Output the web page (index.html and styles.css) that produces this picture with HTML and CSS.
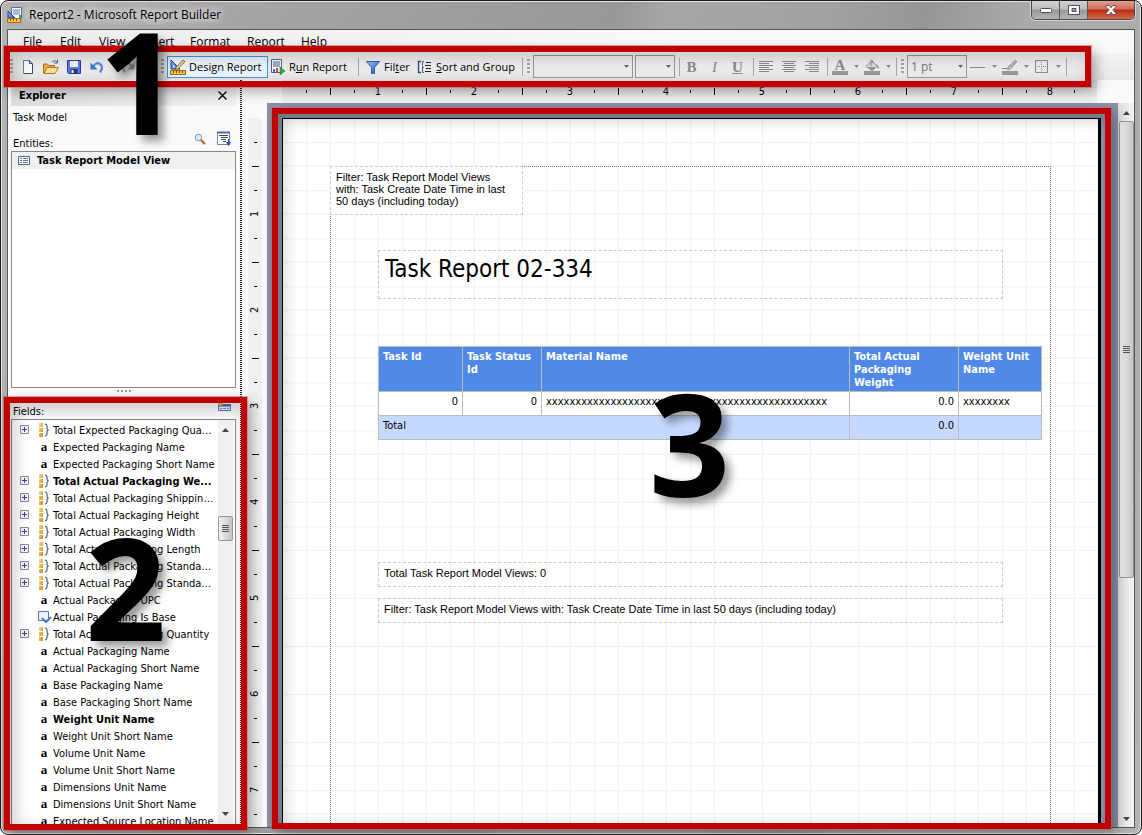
FILE: index.html
```html
<!DOCTYPE html>
<html lang="en">
<head>
    <meta charset="UTF-8">
    <title>Report2 - Microsoft Report Builder</title>
    <link rel="stylesheet" href="styles.css">
</head>
<body>

<!-- shared icons -->
<svg class="sprite" aria-hidden="true">
    <defs>
        <linearGradient id="gold" x1="0" y1="0" x2="1" y2="1">
            <stop offset="0" stop-color="#ffd98a"/>
            <stop offset="1" stop-color="#d08a12"/>
        </linearGradient>
        <linearGradient id="blue" x1="0" y1="0" x2="1" y2="1">
            <stop offset="0" stop-color="#a9cdf8"/>
            <stop offset="1" stop-color="#1d4fb8"/>
        </linearGradient>
    </defs>
    <symbol id="i-design" viewBox="0 0 16 16">
        <path d="M1 1v9h9z" fill="url(#blue)" stroke="#1c3f94"/>
        <path d="M3 6v2.500h2.500z" fill="#fff"/>
        <path d="M6 8.500 13 1l2 1.500L8 10l-2.500.7z" fill="#f3d08a" stroke="#7a5a3a" stroke-width=".8"/>
        <path d="M.5 11.500h15v4H.5z" fill="#f7c64a" stroke="#a56a06"/>
        <path d="M3.500 12v2M6.500 12v2M9.500 12v2M12.500 12v2" stroke="#7d4e00"/>
    </symbol>
    <symbol id="i-sum" viewBox="0 0 12 16">
        <path d="M1 1h4v4H1zM1 6h4v4H1zM1 11h4v4H1z" fill="url(#gold)"/>
        <path d="M7 2q2 0 2 2v2q0 2 1.500 2Q9 8 9 10v2q0 2-2 2" fill="none" stroke="#2c3c5c"/>
    </symbol>
    <symbol id="i-plus" viewBox="0 0 9 9">
        <path d="M.5.5h8v8h-8z" fill="#f4f4f4" stroke="#8c8c8c"/>
        <path d="M2 4.500h5M4.500 2v5" stroke="#2a4a9c"/>
    </symbol>
    <symbol id="i-down" viewBox="0 0 5 3"><path d="M0 0h5L2.500 3z" fill="currentColor"/></symbol>
</svg>

<div class="window">
    <header class="titlebar">
        <svg class="app-icon" viewBox="0 0 16 16">
            <path d="M4.500.5h10v11h-10z" fill="#fff" stroke="#5a6f96"/>
            <path d="M6 3h7M6 5h7M6 7h7" stroke="#5378b8"/>
            <path d="M12 8h2v5h-2z" fill="#2fb344"/>
            <path d="M1 4v7h7z" fill="url(#blue)" stroke="#1c3f94"/>
            <path d="M.5 11.500h13v4H.5z" fill="#f7c64a" stroke="#a56a06"/>
            <path d="M3.500 12v2M6.500 12v2M9.500 12v2" stroke="#7d4e00"/>
        </svg>
        <span class="title">Report2 - Microsoft Report Builder</span>
        <div class="win-buttons">
            <button class="win-btn" aria-label="Minimize">
                <svg width="12" height="5" viewBox="0 0 12 5"><rect x=".5" y=".5" width="11" height="4" rx="1" fill="#fff" stroke="#4a4c60"/></svg>
            </button>
            <button class="win-btn" aria-label="Restore">
                <svg width="12" height="10" viewBox="0 0 12 10"><path d="M.5.5h11v9H.5zM4 3.500v3h4v-3z" fill="#fff" fill-rule="evenodd" stroke="#4a4c60"/></svg>
            </button>
            <button class="win-btn win-close" aria-label="Close">
                <svg width="12" height="10" viewBox="0 0 12 10"><path d="M1 .5h3l2 2.300L8 .5h3v1L7.800 5 11 8.500v1H8L6 7.200 4 9.500H1v-1L4.200 5 1 1.500z" fill="#fff" stroke="#5a4a58" stroke-width=".9"/></svg>
            </button>
        </div>
    </header>

    <div class="client">
        <nav class="menubar">
            <button class="m-file"><u>F</u>ile</button>
            <button class="m-edit"><u>E</u>dit</button>
            <button class="m-view"><u>V</u>iew</button>
            <button class="m-insert"><u>I</u>nsert</button>
            <button class="m-format">F<u>o</u>rmat</button>
            <button class="m-report">Re<u>p</u>ort</button>
            <button class="m-help"><u>H</u>elp</button>
        </nav>

        <div class="toolbar">
            <span class="grip"></span>
            <button class="tool wide" aria-label="New">
                <svg width="16" height="16" viewBox="0 0 16 16"><path d="M3.500 1.500h6l3 3v10h-9z" fill="#fff" stroke="#6b7f9f"/><path d="M9.500 1.500v3h3M12.500 5v9.500h-8" fill="none" stroke="#2f4a75"/></svg>
            </button>
            <button class="tool wide" aria-label="Open">
                <svg width="16" height="16" viewBox="0 0 16 16"><path d="M.5 14V5h4l1 1.500h6V14z" fill="#e6b24a" stroke="#a8701a"/><path d="M1 14.500 4 8.500h11.500l-3.500 6z" fill="#ffe09a" stroke="#b47a1c"/><path d="M9 3q3-3 5 0M14.500.5V4H11" fill="none" stroke="#4b6a94"/></svg>
            </button>
            <button class="tool wide" aria-label="Save">
                <svg width="16" height="16" viewBox="0 0 16 16"><path d="M1.500 1.500h13v13h-12l-1-1z" fill="#5b7fe0" stroke="#2b3d9c"/><path d="M4 2h8v6H4z" fill="#f4f7ff"/><path d="M4.500 10h7v4.500h-7z" fill="#28366f"/><path d="M5.500 11h2v3h-2z" fill="#fff"/></svg>
            </button>
            <button class="tool wide" aria-label="Undo">
                <svg width="16" height="16" viewBox="0 0 16 16"><path d="M4 8q3-5.500 7-3t0 8.500" fill="none" stroke="#5b8fdc" stroke-width="2.400"/><path d="M1.500 3.500v7h7z" fill="#3f78cc"/></svg>
            </button>
            <button class="tool redo" aria-label="Redo">
                <svg width="16" height="16" viewBox="0 0 16 16"><path d="M12 8Q9 2.500 5 5t0 8.500" fill="none" stroke="#a0a0a0" stroke-width="2"/><path d="M14.500 3.500v7h-7z" fill="#999"/></svg>
            </button>
            <span class="sep"></span>
            <span class="grip"></span>
            <button class="tool text active"><svg width="16" height="16"><use href="#i-design"/></svg><span>Desi<u>g</u>n Report</span></button>
            <button class="tool text run">
                <svg width="16" height="16" viewBox="0 0 16 16"><path d="M1.500.5h10v13h-10z" fill="#fff" stroke="#51658c"/><path d="M3 3h7M3 5h7M3 7h7" stroke="#4a5f94"/><path d="M3 10h2v3H3z" fill="#3a6fe0"/><path d="M6 9h2v4H6z" fill="#e03c3c"/><path d="m10 8 5 4-5 4z" fill="#35a845" stroke="#1c7a2c" stroke-width=".6"/></svg>
                <span>R<u>u</u>n Report</span>
            </button>
            <span class="sep"></span>
            <button class="tool text filter">
                <svg width="16" height="16" viewBox="0 0 16 16"><path d="M1.500 2.500h13L9.500 8.500v6h-3v-6z" fill="url(#blue)" stroke="#2f5fb8"/></svg>
                <span>Fil<u>t</u>er</span>
            </button>
            <button class="tool text sort">
                <svg width="16" height="16" viewBox="0 0 16 16"><path d="M4 2.500H1.500v11H4" fill="none" stroke="#3d4c6c" stroke-width="1.400"/><path d="M7 2.500H5.500v4M7 8.500H5.500v5H7M5.500 7v1" fill="none" stroke="#3d5c9c"/><path d="M9 3.500h5M8 6.500h6M9 9.500h5M8 12.500h6" stroke="#222"/></svg>
                <span><u>S</u>ort and Group</span>
            </button>
            <span class="sep"></span>
            <span class="grip"></span>
            <span class="combo font"><select aria-label="Font" disabled><option></option></select><svg><use href="#i-down"/></svg></span>
            <span class="combo size"><select aria-label="Font size" disabled><option></option></select><svg><use href="#i-down"/></svg></span>
            <span class="sep tight"></span>
            <button class="tool wide letter" disabled><b>B</b></button>
            <button class="tool wide letter" disabled><i>I</i></button>
            <button class="tool wide letter" disabled><b><u>U</u></b></button>
            <span class="sep tight"></span>
            <button class="tool wide" aria-label="Align left" disabled>
                <svg width="16" height="14" viewBox="0 0 16 14"><path d="M1 1.500h14M1 3.500h10M1 5.500h14M1 7.500h10M1 9.500h14M1 11.500h10" stroke="#8a8a8a"/></svg>
            </button>
            <button class="tool wide" aria-label="Center" disabled>
                <svg width="16" height="14" viewBox="0 0 16 14"><path d="M1 1.500h14M3 3.500h10M1 5.500h14M3 7.500h10M1 9.500h14M3 11.500h10" stroke="#8a8a8a"/></svg>
            </button>
            <button class="tool wide" aria-label="Align right" disabled>
                <svg width="16" height="14" viewBox="0 0 16 14"><path d="M1 1.500h14M5 3.500h10M1 5.500h14M5 7.500h10M1 9.500h14M5 11.500h10" stroke="#8a8a8a"/></svg>
            </button>
            <span class="sep"></span>
            <button class="tool split letter" aria-label="Text color" disabled><b class="swatch">A</b><svg class="arrow"><use href="#i-down"/></svg></button>
            <button class="tool split" aria-label="Fill color" disabled>
                <svg width="16" height="16" viewBox="0 0 16 16"><path d="m2 7 6-5 5 5-5 5z" fill="#ddd" stroke="#999"/><path d="M7 7V1.500q0-1 1.500 0V4" fill="none" stroke="#8a8a8a"/><path d="M3 8h9l-4 3.500zM12 5q3 1 3 5-2 0-2-3z" fill="#999"/><path d="M0 12h16v4H0z" fill="#999"/></svg>
                <svg class="arrow"><use href="#i-down"/></svg>
            </button>
            <span class="sep"></span>
            <span class="grip"></span>
            <span class="combo weight"><select aria-label="Line width" disabled><option>1 pt</option></select><svg><use href="#i-down"/></svg></span>
            <button class="tool split" aria-label="Line style" disabled>
                <svg width="16" height="16" viewBox="0 0 16 16"><path d="M0 8.500h15" stroke="#8a8a8a"/></svg>
                <svg class="arrow"><use href="#i-down"/></svg>
            </button>
            <button class="tool split" aria-label="Line color" disabled>
                <svg width="16" height="16" viewBox="0 0 16 16"><path d="m6 8 7-6.500 2 1L8.500 10l-3 .5z" fill="#bbb" stroke="#999"/><path d="M0 9.500h5" stroke="#8a8a8a"/><path d="M0 12h16v4H0z" fill="#999"/></svg>
                <svg class="arrow"><use href="#i-down"/></svg>
            </button>
            <button class="tool split" aria-label="Borders" disabled>
                <svg width="16" height="16" viewBox="0 0 16 16"><path d="M1.500 1.500h12v12h-12z" fill="none" stroke="#8a8a8a"/><path d="M7.500 3v10M3 7.500h10" stroke="#8a8a8a" stroke-dasharray="1 1"/></svg>
                <svg class="arrow"><use href="#i-down"/></svg>
            </button>
            <span class="sep"></span>
        </div>

        <div class="workspace">
            <aside class="explorer">
                <div class="pane-head">
                    <h2>Explorer</h2>
                    <button aria-label="Close explorer"><svg width="9" height="9" viewBox="0 0 9 9"><path d="M.5.5l8 8M8.500.5l-8 8" stroke="#000" stroke-width="1.300"/></svg></button>
                </div>
                <div class="model">Task Model</div>
                <div class="pane-label entities-label">
                    <span>Entities:</span>
                    <button aria-label="Search"><svg width="12" height="12" viewBox="0 0 12 12"><path d="m6 6 5 5" stroke="#b0702c" stroke-width="2.400"/><circle cx="4.500" cy="4.500" r="3.300" fill="#d8ecfa" stroke="#8296aa"/></svg></button>
                    <button aria-label="Sort"><svg width="16" height="16" viewBox="0 0 16 16"><path d="M1.500 1.500h12v12h-12z" fill="#fff" stroke="#6a86b8"/><path d="M1 1.500h13" stroke="#4a6aa8" stroke-width="2"/><path d="M3 4.500h9M5 6.500h7M5 8.500h5M7 10.500h3" stroke="#444"/><path d="M12.500 8v4M10.500 11.500h4l-2 3z" fill="#2c5fc4" stroke="#2c5fc4"/></svg></button>
                </div>
                <div class="entities">
                    <div class="entity">
                        <svg width="12" height="9" viewBox="0 0 12 9"><path d="M.5.5h11v8H.5z" fill="#fff" stroke="#4d628c"/><path d="M2 2.500h2M2 4.500h2M2 6.500h2M5 2.500h5M5 4.500h5M5 6.500h5" stroke="#5a74a8"/></svg>
                        <span>Task Report Model View</span>
                    </div>
                </div>
                <div class="splitter"><span></span></div>
                <div class="pane-label fields-label">
                    <span>Fields:</span>
                    <button aria-label="New field"><svg width="15" height="10" viewBox="0 0 15 10"><path d="M1.500 3.500h12v6h-12z" fill="#e6eefa" stroke="#5070b0"/><path d="M2 4.500h12" stroke="#3f68c0" stroke-width="2"/><path d="M3 7.500h2M6 7.500h3M10 7.500h2" stroke="#7a8eb8"/><path d="m3.500 0 1 2 2.500 1-2.500 1-1 2-1-2L0 3l2.500-1z" fill="#f5b428"/></svg></button>
                </div>
                <div class="fields">
                    <ul id="fields"></ul>
                    <div class="scroll fields-scroll">
                        <svg width="7" height="4" viewBox="0 0 7 4"><path d="M0 4h7L3.500 0z" fill="#444"/></svg>
                        <div class="thumb"><i></i></div>
                        <svg width="7" height="4" viewBox="0 0 7 4"><path d="M0 0h7L3.500 4z" fill="#444"/></svg>
                    </div>
                </div>
            </aside>

            <main class="design">
                <div class="ruler-x"><span>1</span><span>2</span><span>3</span><span>4</span><span>5</span><span>6</span><span>7</span><span>8</span></div>
                <div class="ruler-y"><span>1</span><span>2</span><span>3</span><span>4</span><span>5</span><span>6</span><span>7</span></div>
                <div class="canvas">
                    <div class="page">
                        <div class="report-body">
                            <div class="textbox note">Filter: Task Report Model Views with: Task Create Date Time in last 50 days (including today)</div>
                            <div class="textbox heading">Task Report 02-334</div>
                            <table>
                                <colgroup><col class="c-id"><col class="c-status"><col><col class="c-weight"><col class="c-unit"></colgroup>
                                <thead>
                                <tr><th>Task Id</th><th>Task Status Id</th><th>Material Name</th><th>Total Actual Packaging Weight</th><th>Weight Unit Name</th></tr>
                                </thead>
                                <tbody>
                                <tr><td class="num">0</td><td class="num">0</td><td>xxxxxxxxxxxxxxxxxxxxxxxxxxxxxxxxxxxxxxxxxxxxxxxx</td><td class="num">0.0</td><td>xxxxxxxx</td></tr>
                                <tr class="total"><td colspan="3">Total</td><td class="num">0.0</td><td></td></tr>
                                </tbody>
                            </table>
                            <div class="textbox summary">Total Task Report Model Views: 0</div>
                            <div class="textbox">Filter: Task Report Model Views with: Task Create Date Time in last 50 days (including today)</div>
                        </div>
                    </div>
                </div>
                <div class="scroll page-scroll">
                    <svg width="7" height="4" viewBox="0 0 7 4"><path d="M0 4h7L3.500 0z" fill="#444"/></svg>
                    <div class="thumb"><i></i></div>
                    <svg width="7" height="4" viewBox="0 0 7 4"><path d="M0 0h7L3.500 4z" fill="#444"/></svg>
                </div>
            </main>
        </div>
    </div>

    <!-- callouts over the window -->
    <div class="callout callout-1"></div>
    <div class="callout callout-2"></div>
    <div class="callout callout-3"></div>
    <div class="digit digit-1">1</div>
    <div class="digit digit-2">2</div>
    <div class="digit digit-3">3</div>
</div>

<script src="fields.js"></script>
</body>
</html>
```
FILE: styles.css
```css
* {
    box-sizing: border-box;
}

body {
    margin: 0;
    background: #fff;
    color: #000;
    font: 11px/13px "DejaVu Sans Condensed", "DejaVu Sans", sans-serif;
}

button {
    margin: 0;
    padding: 0;
    border: 0;
    background: none;
    color: inherit;
    font: inherit;
}

svg {
    display: block;
    flex: none;
}

.sprite {
    position: absolute;
    width: 0;
    height: 0;
}

/* window frame */
.window {
    position: relative;
    display: flex;
    flex-direction: column;
    height: 100vh;
    padding: 0 6px 6px;
    border: 1px solid #1c1c1c;
    border-radius: 8px;
    background: linear-gradient(100deg, #b4b4b4 0, #a4a4a4 20%, #989898 48%, #a6a6a6 52%, #a2a2a2 64%, #969696 72%, #aaa 80%, #b2b2b2 100%);
    box-shadow: inset 0 0 0 1px #e4e4e4;
    overflow: hidden;
}

.titlebar {
    display: flex;
    flex: none;
    height: 28px;
    font: 12px/28px "Open Sans", "Noto Sans", sans-serif;
}

.app-icon {
    width: 16px;
    height: 16px;
    margin: 6px 6px 0 0;
}

.title {
    flex: 1;
    text-shadow: 0 0 8px #fff, 0 0 10px #fff;
}

.win-buttons {
    display: flex;
    height: 19px;
    border: 1px solid #4d4d4d;
    border-top: 0;
    border-radius: 0 0 5px 5px;
    box-shadow: 0 0 0 1px #d4d4d4;
    overflow: hidden;
}

.win-btn {
    display: flex;
    align-items: center;
    justify-content: center;
    width: 28px;
    border-right: 1px solid #555;
    background: linear-gradient(#d0d0d0 0, #bcbcbc 45%, #989898 50%, #b4b4b4 100%);
}

.win-close {
    width: 46px;
    border-right: 0;
    background: linear-gradient(#e0a090 0, #cf6a55 45%, #b82c14 50%, #d4694a 100%);
}

.client {
    display: flex;
    flex: 1;
    flex-direction: column;
    min-height: 0;
    border: 1px solid #555;
    background: #fafafa;
}

/* menu and toolbar */
.menubar {
    display: flex;
    flex: none;
    height: 23px;
    padding-left: 15px;
    background: linear-gradient(90deg, #ececec, #fafafa 60%);
    font: 12px/24px "Open Sans", "Noto Sans", sans-serif;
}

.menubar button {
    text-align: left;
}

.m-file { width: 37px; }
.m-edit { width: 39px; }
.m-view { width: 43px; }
.m-insert { width: 48px; }
.m-format { width: 57px; }
.m-report { width: 54px; }
.m-help { width: 40px; }

.toolbar {
    display: flex;
    flex: none;
    align-items: center;
    height: 27px;
    padding-left: 2px;
    background: linear-gradient(#f4f4f4, #e8e8e8);
    font: 11px/20px "Open Sans", "Noto Sans", sans-serif;
}

.grip {
    width: 3px;
    height: 15px;
    margin-right: 3px;
    background: repeating-linear-gradient(#a4a4a4 0 2px, transparent 2px 4px);
}

.sep {
    width: 1px;
    height: 18px;
    margin: 0 4px;
    background: #aaa;
}

.tight {
    margin-right: 0;
}

.tool {
    display: flex;
    flex: none;
    align-items: center;
    height: 22px;
}

.wide {
    justify-content: center;
    width: 23px;
}

.redo {
    justify-content: flex-start;
    width: 44px;
    padding-left: 12px;
}

.text {
    gap: 3px;
    padding: 0 2px;
    white-space: nowrap;
}

.active {
    width: 101px;
    border: 1px solid #3c97ec;
    background: #eef6fd;
}

.run { width: 86px; }
.filter { width: 52px; }
.sort { width: 103px; }

.letter {
    color: #8a8a8a;
    font: 15px/18px "Liberation Serif", serif;
}

.combo {
    position: relative;
    flex: none;
    height: 23px;
    margin-right: 2px;
}

.combo select {
    width: 100%;
    height: 100%;
    padding: 0 3px;
    border: 1px solid #999;
    border-radius: 0;
    appearance: none;
    background: #ededed;
    color: #777;
    opacity: 1;
    font: 12px/20px "Open Sans", "Noto Sans", sans-serif;
}

.combo svg {
    position: absolute;
    top: 10px;
    right: 4px;
    width: 5px;
    height: 3px;
    color: #666;
}

.font { width: 100px; }
.size { width: 40px; margin-right: 0; }
.weight { width: 60px; margin-right: 3px; }

.split {
    gap: 6px;
    width: 32px;
}

.split + .sep {
    margin-left: 0;
}

.arrow {
    width: 5px;
    height: 3px;
    color: #8a8a8a;
}

.swatch {
    width: 16px;
    height: 16px;
    border-bottom: 4px solid #999;
    line-height: 12px;
}

/* explorer */
.workspace {
    display: flex;
    flex: 1;
    min-height: 0;
}

.explorer {
    display: flex;
    flex: none;
    flex-direction: column;
    width: 234px;
    padding: 4px 6px 2px 3px;
    background: repeating-linear-gradient(#222 0 1px, transparent 1px 2px) right / 2px 100% no-repeat;
}

.pane-head {
    display: flex;
    align-items: center;
    justify-content: space-between;
    height: 22px;
    padding: 0 9px 0 8px;
    background: linear-gradient(90deg, #dedede, #f2f2f2);
}

h2 {
    margin: 0;
    font-size: 11px;
}

.model {
    height: 22px;
    padding: 5px 2px 4px;
}

.pane-label {
    display: flex;
    gap: 10px;
    padding: 0 4px 0 2px;
}

.pane-label span {
    flex: 1;
}

.entities-label {
    align-items: flex-end;
    height: 23px;
    padding-bottom: 1px;
}

.entities-label button {
    align-self: center;
}

.entities {
    flex: none;
    height: 237px;
    border: 1px solid #828790;
    background: #fff;
}

.entity {
    display: flex;
    gap: 7px;
    align-items: center;
    height: 17px;
    padding-left: 6px;
    background: #f0f0f0;
    font-weight: bold;
}

.splitter {
    display: flex;
    justify-content: center;
    flex: none;
    height: 14px;
    padding-top: 2px;
}

.splitter span {
    width: 14px;
    height: 2px;
    background: repeating-linear-gradient(90deg, #999 0 2px, transparent 2px 4px);
}

.fields-label {
    flex: none;
    height: 17px;
    padding-top: 3px;
}

.fields-label button {
    align-self: flex-start;
    margin-top: -4px;
}

.fields {
    display: flex;
    flex: 1;
    min-height: 0;
    border: 1px solid #828790;
    background: #fff;
    overflow: hidden;
}

.fields ul {
    flex: 1;
    min-width: 0;
    margin: 0;
    padding: 2px 3px 0 8px;
    list-style: none;
}

.fields li {
    display: flex;
    align-items: center;
    height: 17px;
}

.fields li.bold {
    font-weight: bold;
}

.fields .name {
    overflow: hidden;
    white-space: nowrap;
    text-overflow: ellipsis;
}

.expander {
    flex: none;
    width: 18px;
    padding-bottom: 3px;
}

.kind {
    display: flex;
    flex: none;
    justify-content: center;
    width: 12px;
    margin-right: 3px;
    padding-bottom: 2px;
    font: bold 13px/13px "Liberation Serif", serif;
}

/* scroll bars */
.scroll {
    display: flex;
    flex: none;
    flex-direction: column;
    align-items: center;
    background: linear-gradient(90deg, #dedede, #f4f4f4);
}

.scroll svg:last-child {
    margin-top: auto;
}

.thumb {
    display: flex;
    align-items: center;
    justify-content: center;
    width: 15px;
    border: 1px solid #979797;
    border-radius: 2px;
    background: linear-gradient(90deg, #f2f2f2, #dcdcdc 50%, #c4c4c8);
}

.thumb i {
    width: 7px;
    height: 8px;
    background: repeating-linear-gradient(#555 0 1px, transparent 1px 2px);
}

.fields-scroll {
    width: 15px;
    margin-right: 2px;
    padding: 8px 0;
    background: #f0f0f0;
}

.fields-scroll .thumb {
    height: 25px;
    margin-top: 84px;
}

/* design surface */
.design {
    display: grid;
    grid-template: 23px 1fr / 25px 1fr 16px;
    flex: 1;
    min-width: 0;
    background: #fafafa;
}

.ruler-x,
.ruler-y {
    display: flex;
    overflow: hidden;
}

.ruler-x {
    grid-column: 2;
    margin: 0 21px 0 15px;
    padding-left: 48px;
    background:
        repeating-linear-gradient(90deg, #000 0 1px, transparent 1px 96px) 48px 8px / 100% 7px repeat-x,
        repeating-linear-gradient(90deg, #000 0 1px, transparent 1px 48px) 24px 10px / 100% 3px repeat-x,
        linear-gradient(#e0e0e0, #f4f4f4);
    background-size: 960px 7px, 960px 3px, auto;
}

.ruler-x span {
    flex: none;
    width: 96px;
    padding-top: 5px;
    text-align: center;
}

.ruler-y {
    grid-area: 2 / 1;
    flex-direction: column;
    min-height: 0;
    width: 14px;
    margin: 15px 0 0 6px;
    padding-top: 48px;
    background:
        repeating-linear-gradient(#000 0 1px, transparent 1px 96px) 4px 48px / 7px 960px repeat-y,
        repeating-linear-gradient(#000 0 1px, transparent 1px 48px) 6px 24px / 3px 960px repeat-y,
        #f0f0f0;
}

.ruler-y span {
    flex: none;
    width: 14px;
    height: 96px;
    line-height: 14px;
    text-align: center;
    writing-mode: vertical-rl;
    transform: rotate(180deg);
}

.canvas {
    grid-area: 2 / 2;
    min-width: 0;
    min-height: 0;
    padding: 15px 17px 0 15px;
    background: #8a92a8;
    overflow: hidden;
}

.page {
    height: 100%;
    padding: 47px 47px 0;
    border: 1px solid #000;
    border-right-width: 3px;
    border-bottom: 0;
    background:
        repeating-linear-gradient(90deg, #f2f2f2 0 1px, transparent 1px 24px) 23px 0,
        repeating-linear-gradient(#f2f2f2 0 1px, transparent 1px 24px) 0 23px,
        #fff;
    background-size: 2400px 2400px;
}

.report-body {
    height: 100%;
    border: 1px dotted #777;
    border-bottom: 0;
}

.textbox {
    height: 25px;
    margin: 0 47px;
    padding: 4px 5px;
    border: 1px dashed #ccc;
    font: 11px/12px "Liberation Sans", Arial, sans-serif;
}

.note {
    width: 193px;
    height: 49px;
    margin: -1px 0 35px -1px;
    padding-right: 8px;
    background: #fff;
}

.heading {
    height: 49px;
    padding: 2px 6px;
    font: 24px/32px "DejaVu Sans Condensed", "DejaVu Sans", sans-serif;
}

table {
    width: calc(100% - 55px);
    margin: 47px 0 122px 47px;
    border-collapse: collapse;
    table-layout: fixed;
    background: #fff;
}

.c-id { width: 84px; }
.c-status { width: 79px; }
.c-weight { width: 109px; }
.c-unit { width: 83px; }

th,
td {
    height: 24px;
    padding: 3px 4px;
    border: 1px solid #bbb;
    overflow: hidden;
    text-align: left;
    vertical-align: top;
}

th {
    height: 45px;
    padding-bottom: 2px;
    background: #5089e8;
    color: #fff;
}

.num {
    text-align: right;
}

.total {
    background: #c6daff;
}

.summary {
    margin-bottom: 11px;
}

.page-scroll {
    grid-area: 2 / 3;
    padding: 8px 0 6px;
}

.page-scroll .thumb {
    height: 457px;
    margin-top: 6px;
}

/* callouts */
.callout {
    position: absolute;
    border: 6px solid #c00000;
    outline: 1px solid rgba(200, 90, 90, .5);
    box-shadow: 5px 5px 12px rgba(0, 0, 0, .3), inset 5px 5px 16px rgba(0, 0, 0, .22);
    pointer-events: none;
}

.callout-1 {
    top: 45px;
    right: 50px;
    left: 3px;
    height: 41px;
}

.callout-2 {
    top: 396px;
    bottom: 4px;
    left: 3px;
    width: 243px;
}

.callout-3 {
    top: 107px;
    right: 30px;
    bottom: 5px;
    left: 271px;
}

.digit {
    position: absolute;
    font: bold 142px/142px "Open Sans", "Noto Sans", sans-serif;
    text-shadow: 6px 6px 8px rgba(0, 0, 0, .4);
    pointer-events: none;
}

.digit-1 { top: 8px; left: 98px; }
.digit-2 { top: 514px; left: 84px; }
.digit-3 { top: 370px; left: 648px; }
```
FILE: fields.js
```js
// s = sum (expandable), a = text attribute, c = yes/no
var fields = [
    ['s', 'Total Expected Packaging Quantity'],
    ['a', 'Expected Packaging Name'],
    ['a', 'Expected Packaging Short Name'],
    ['s', 'Total Actual Packaging We...', true],
    ['s', 'Total Actual Packaging Shipping Weight'],
    ['s', 'Total Actual Packaging Height'],
    ['s', 'Total Actual Packaging Width'],
    ['s', 'Total Actual Packaging Length'],
    ['s', 'Total Actual Packaging Standard Cost'],
    ['s', 'Total Actual Packaging Standard Price'],
    ['a', 'Actual Packaging UPC'],
    ['c', 'Actual Packaging Is Base'],
    ['s', 'Total Actual Packaging Quantity'],
    ['a', 'Actual Packaging Name'],
    ['a', 'Actual Packaging Short Name'],
    ['a', 'Base Packaging Name'],
    ['a', 'Base Packaging Short Name'],
    ['a', 'Weight Unit Name', true],
    ['a', 'Weight Unit Short Name'],
    ['a', 'Volume Unit Name'],
    ['a', 'Volume Unit Short Name'],
    ['a', 'Dimensions Unit Name'],
    ['a', 'Dimensions Unit Short Name'],
    ['a', 'Expected Source Location Name']
];

var icons = {
    s: '<svg width="12" height="16"><use href="#i-sum"/></svg>',
    a: 'a',
    c: '<svg width="15" height="14" viewBox="0 0 15 14"><path d="M1.500 1.500h10v9h-10z" fill="#eef3fb" stroke="#5876ac"/><path d="m5 8 4 4 5-5" fill="none" stroke="#4a7ad0" stroke-width="2"/></svg>'
};

var html = '';
for (var i = 0; i < fields.length; i++) {
    var f = fields[i];
    html += '<li' + (f[2] ? ' class="bold"' : '') + '>' +
        '<span class="expander">' + (f[0] === 's' ? '<svg width="9" height="9"><use href="#i-plus"/></svg>' : '') + '</span>' +
        '<span class="kind">' + icons[f[0]] + '</span>' +
        '<span class="name">' + f[1] + '</span></li>';
}
document.getElementById('fields').innerHTML = html;
```
